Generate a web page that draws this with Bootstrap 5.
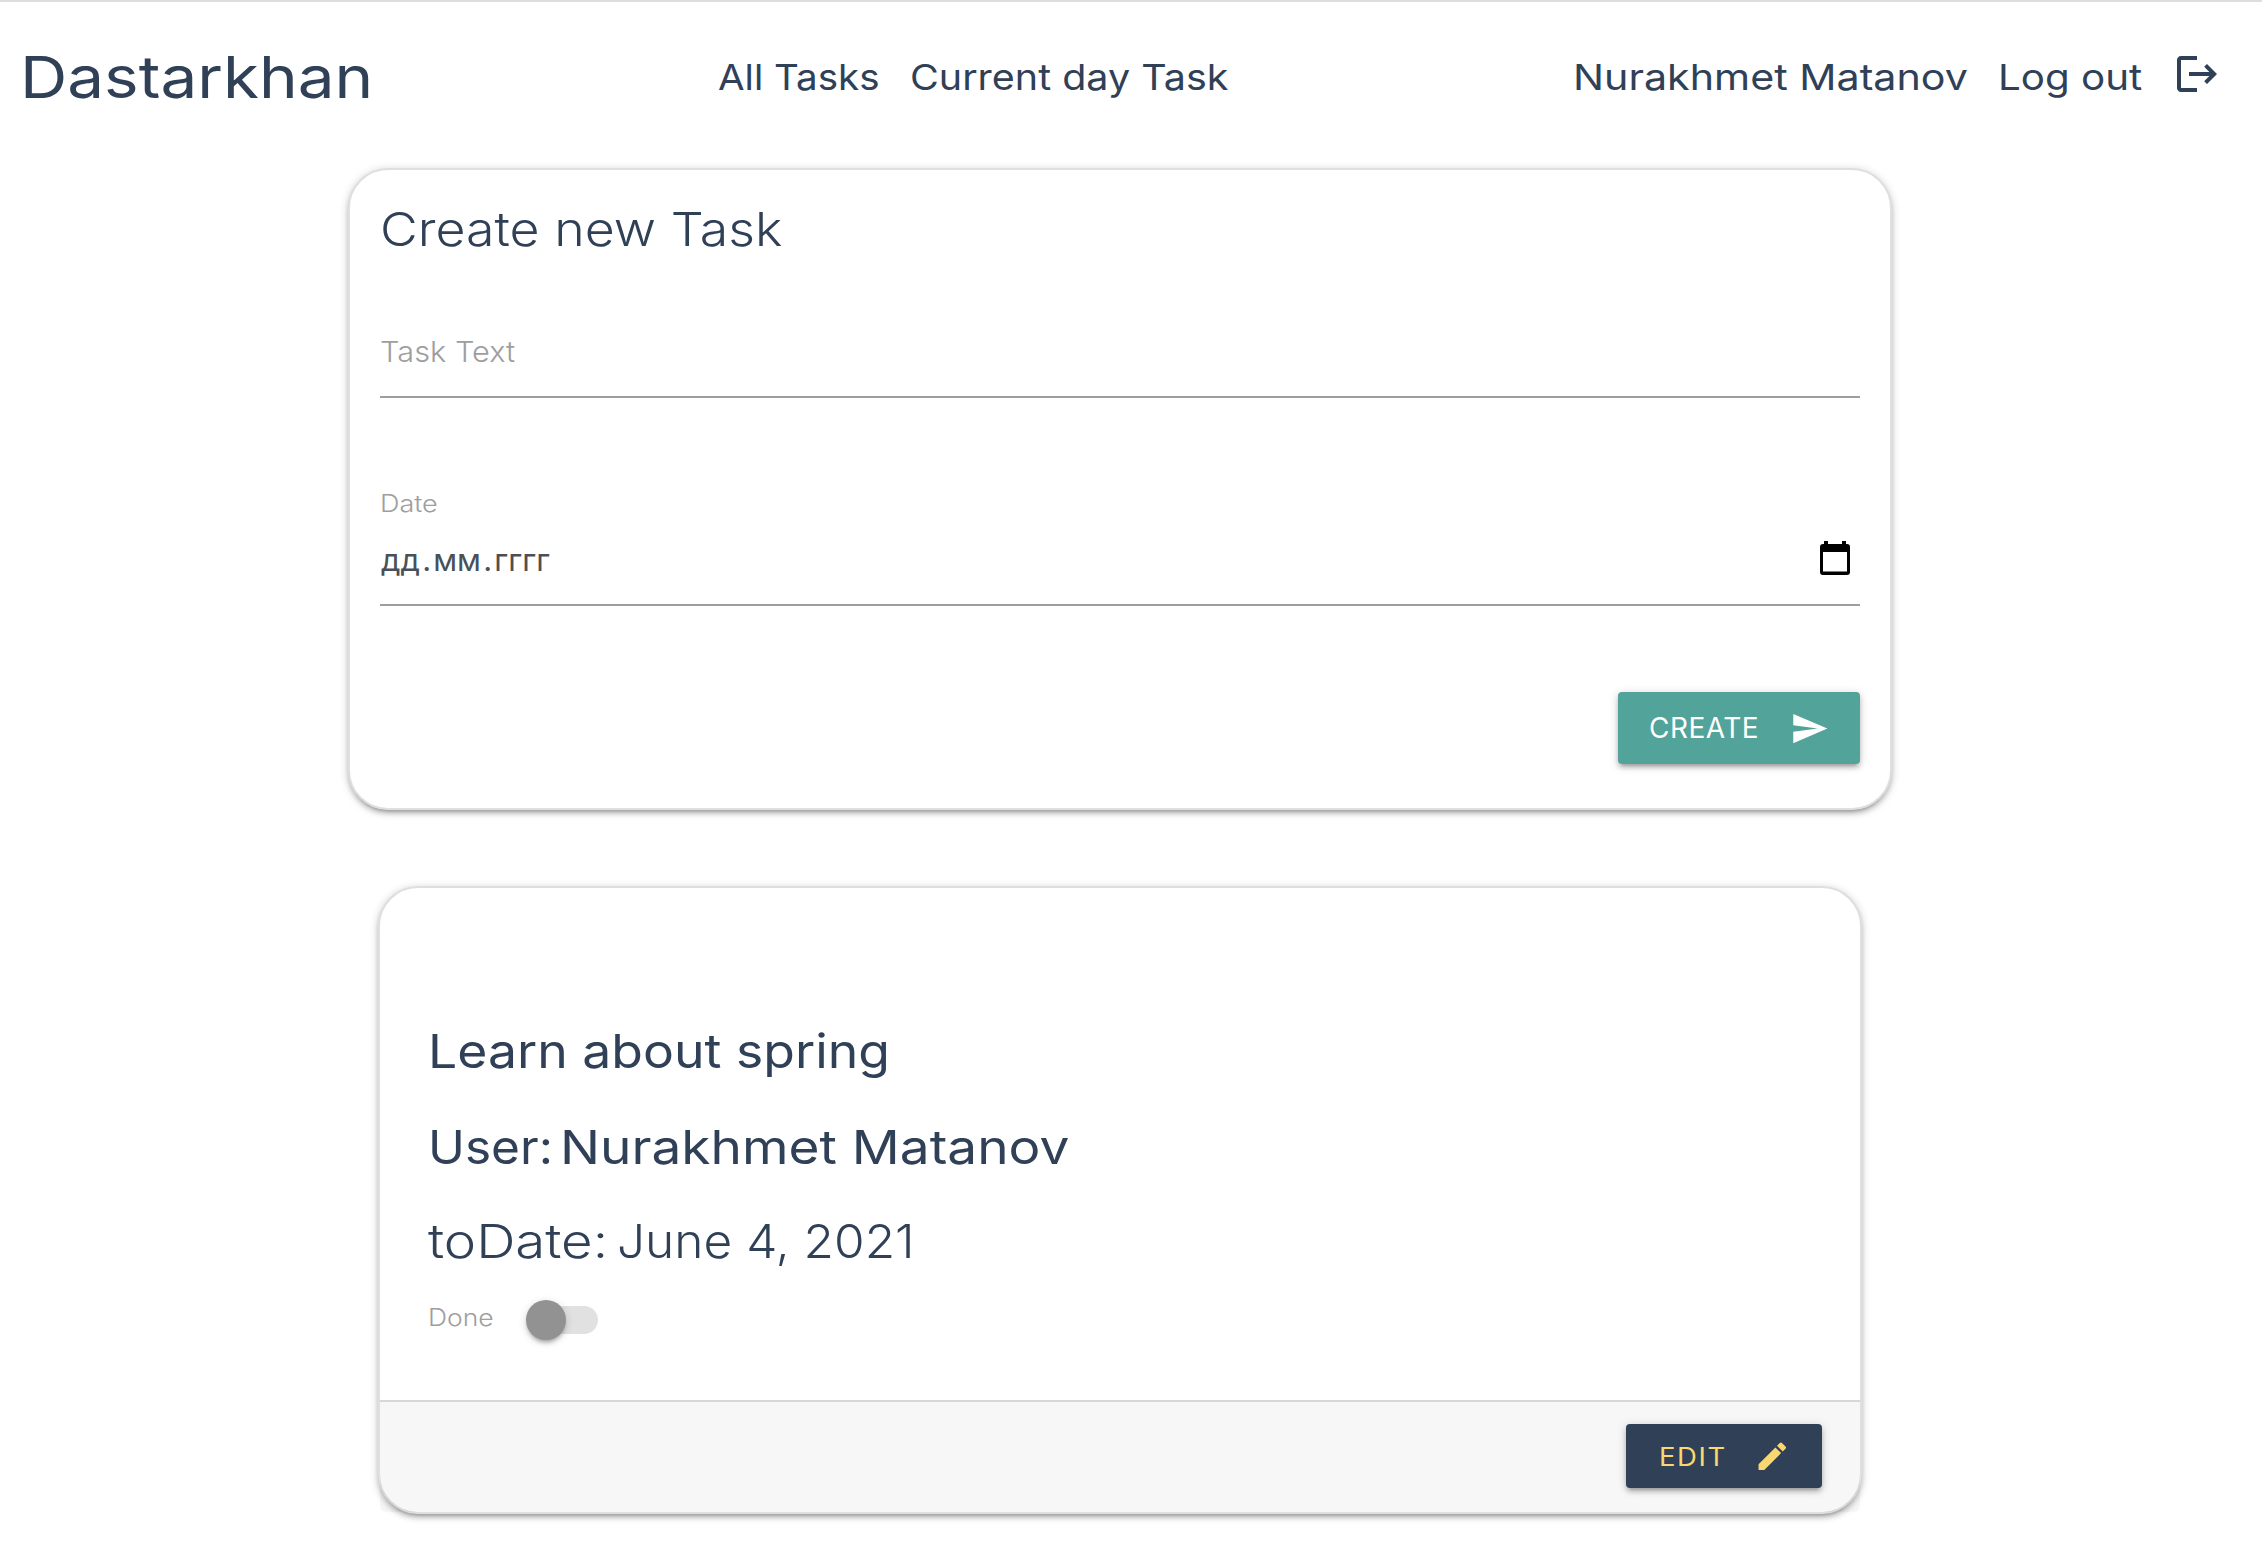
<!DOCTYPE html>
<html lang="en">
<head>
<meta charset="utf-8">
<meta name="viewport" content="width=device-width, initial-scale=1">
<title>Dastarkhan</title>
<link href="https://cdn.jsdelivr.net/npm/bootstrap@5.3.0/dist/css/bootstrap.min.css" rel="stylesheet">
<style>
  :root { --navy: #2f4057; --soft: #9e9e9e; }
  body { font-family: Inter, "Open Sans", sans-serif; color: var(--navy); background: #fff; font-weight: 400; min-height: 1558px; }
  /* widened letterforms: --w is the horizontal stretch */
  .wide { display: inline-block; white-space: nowrap; transform: scaleX(var(--w)); transform-origin: left center; }
  .topbar { height: 152px; border-top: 2px solid #dddce1; padding: 0 41px 0 20px; }
  .topbar .navbar-brand { width: 698px; margin: 0; padding: 0; font-size: 58px; line-height: 70px; color: var(--navy); }
  .topbar a { color: var(--navy); text-decoration: none; }
  .menu { font-size: 36px; line-height: 44px; }
  .w-all { width: 192px; --w: 1.07; }
  .w-cur { width: 330px; --w: 1.096; }
  .w-usr { width: 425px; --w: 1.145; }
  .w-out { width: 175px; --w: 1.12; }
  .exit-icon { width: 48px; height: 48px; margin-bottom: 6px; }
  .panel { border: 2px solid #dfdfdf; border-radius: 40px; background: #fff;
    box-shadow: 0 4px 4px 0 rgba(0,0,0,.14), 0 6px 2px -4px rgba(0,0,0,.12), 0 2px 10px 0 rgba(0,0,0,.2); }
  .create-panel { width: 1544px; margin: 16px 0 0 348px; padding: 30px 30px 44px; }
  .task-panel { width: 1484px; margin: 76px 0 0 378px; }
  .head { font-size: 47px; line-height: 58px; margin: 0; color: var(--navy); font-weight: 400; }
  .thin { font-weight: 300; }
  .text-field { margin-top: 48px; height: 92px; border-bottom: 2px solid var(--soft); color: var(--soft);
    font-size: 29px; line-height: 91px; }
  .date-label { margin-top: 88px; font-size: 23.5px; line-height: 36px; color: var(--soft); }
  .date-field { height: 84px; border-bottom: 2px solid var(--soft); color: #495057; font-size: 31px; padding: 0 10px 0 1px; }
  .date-parts { line-height: 76px; }
  .date-parts i { font-style: normal; padding: 0 2.2px; }
  .date-field svg { width: 30px; height: 34px; margin-top: 18.5px; }
  .action { display: flex; align-items: center; border: 0; border-radius: 4px; padding: 0;
    box-shadow: 0 4px 4px 0 rgba(0,0,0,.14), 0 6px 2px -4px rgba(0,0,0,.12), 0 2px 10px 0 rgba(0,0,0,.2); }
  .send-btn { width: 242px; height: 72px; margin-top: 86px; padding: 0 31px 0 31px; background: #52a39a; color: #fff; font-size: 28px; letter-spacing: .5px; }
  .send-btn svg { width: 39px; height: 39px; }
  .edit-btn { width: 196px; height: 64px; padding: 0 32px 0 33px; background: #2f4057; color: #fbd770; font-size: 25px; letter-spacing: 1.4px; }
  .edit-btn .wide { padding-top: 3px; }
  .edit-btn svg { width: 36.5px; height: 36.5px; }
  .task-body { padding: 134px 48px 60px; }
  .done-row { margin-top: 30px; height: 40px; font-size: 23.5px; color: var(--soft); }
  .done-row .wide { line-height: 35px; width: 98px; }
  .lever { width: 72px; height: 40px; padding: 6px 0 6px 2px; }
  .lever-track { height: 28px; border-radius: 14px; background: #e1e1e1; }
  .lever-knob { position: absolute; left: 0; top: 0; width: 40px; height: 40px; border-radius: 50%; background: #929292;
    box-shadow: 0 4px 4px -2px rgba(0,0,0,.3), 0 2px 8px 0 rgba(0,0,0,.16); }
  .task-foot { height: 112px; padding: 22px 38px 24px; background: rgba(0,0,0,.03); border-top: 2px solid #d7d7d7; border-radius: 0 0 6px 6px; }
  .w-brand { --w: 1.13; } .w-create { --w: 1.103; } .w-text { --w: 1.06; } .w-date { --w: 1.15; }
  .w-learn { --w: 1.1; } .w-done { --w: 1.126; } .w-edit { --w: 1.1; }
  .w-user { --w: 1.055; width: 132px; } .w-name { --w: 1.131; }
  .w-to { --w: 1.16; width: 189px; } .w-day { --w: 1.055; }
  .gap-a { margin-top: 38px; } .gap-b { margin-top: 36px; }
</style>
</head>
<body>
<nav class="topbar d-flex align-items-center">
  <a class="navbar-brand" href="#"><span class="wide w-brand">Dastarkhan</span></a>
  <div class="menu d-flex align-items-center">
    <a class="w-all" href="#"><span class="wide">All Tasks</span></a>
    <a class="w-cur" href="#"><span class="wide">Current day Task</span></a>
  </div>
  <div class="menu d-flex align-items-center ms-auto">
    <a class="w-usr" href="#"><span class="wide">Nurakhmet Matanov</span></a>
    <a class="w-out" href="#"><span class="wide">Log out</span></a>
    <svg class="exit-icon" viewBox="0 0 24 24" fill="#2f4057"><path d="M17 7l-1.41 1.41L18.17 11H8v2h10.17l-2.58 2.58L17 17l5-5zM4 5h8V3H4c-1.1 0-2 .9-2 2v14c0 1.1.9 2 2 2h8v-2H4V5z"/></svg>
  </div>
</nav>

<section class="panel create-panel">
  <h4 class="head thin"><span class="wide w-create">Create new Task</span></h4>
  <div class="text-field thin"><span class="wide w-text">Task Text</span></div>
  <div class="date-label thin"><span class="wide w-date">Date</span></div>
  <div class="date-field d-flex justify-content-between align-items-start">
    <span class="date-parts">дд<i>.</i>мм<i>.</i>гггг</span>
    <svg viewBox="0 0 30 34"><path fill="#000" fill-rule="evenodd" d="M4 0h4v3h14V0h4v3h1a3 3 0 0 1 3 3v25a3 3 0 0 1-3 3H3a3 3 0 0 1-3-3V6a3 3 0 0 1 3-3h1zM3 11v19.5h24V11z"/></svg>
  </div>
  <button class="action send-btn justify-content-between ms-auto" type="button">CREATE
    <svg viewBox="0 0 24 24" fill="#fff"><path d="M2.01 21L23 12 2.01 3 2 10l15 2-15 2z"/></svg>
  </button>
</section>

<section class="panel task-panel">
  <div class="task-body">
    <h4 class="head"><span class="wide w-learn">Learn about spring</span></h4>
    <h4 class="head gap-a d-flex"><span class="wide w-user">User: </span><span class="wide w-name">Nurakhmet Matanov</span></h4>
    <h4 class="head thin gap-b d-flex"><span class="wide w-to">toDate: </span><span class="wide w-day">June 4, 2021</span></h4>
    <div class="done-row thin d-flex align-items-start">
      <span class="wide w-done">Done</span>
      <div class="lever position-relative"><div class="lever-track"></div><div class="lever-knob"></div></div>
    </div>
  </div>
  <div class="task-foot">
    <button class="action edit-btn justify-content-between ms-auto" type="button"><span class="wide w-edit">EDIT</span>
      <svg viewBox="0 0 24 24" fill="#fbd770"><path d="M3 17.25V21h3.75L17.81 9.94l-3.75-3.75L3 17.25zM20.71 7.04a.996.996 0 0 0 0-1.41l-2.34-2.34a.996.996 0 0 0-1.41 0l-1.83 1.83 3.75 3.75 1.83-1.83z"/></svg>
    </button>
  </div>
</section>
<script src="https://cdn.jsdelivr.net/npm/bootstrap@5.3.0/dist/js/bootstrap.bundle.min.js"></script>
</body>
</html>
